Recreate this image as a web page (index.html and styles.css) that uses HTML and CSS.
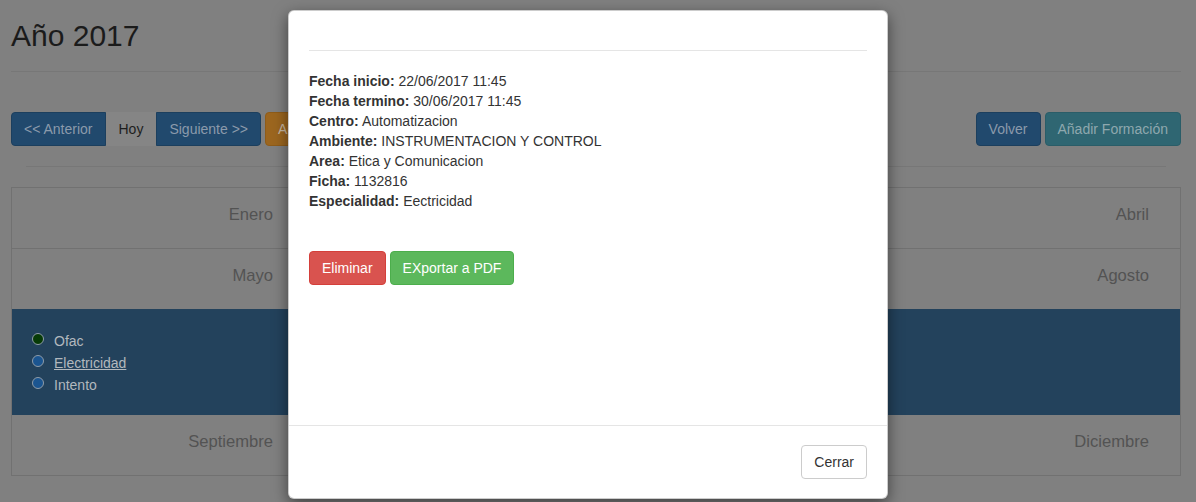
FILE: index.html
```html
<!DOCTYPE html>
<html lang="es">
<head>
<meta charset="utf-8">
<title>Año 2017</title>
<link rel="stylesheet" href="styles.css">
</head>
<body>
<div class="page">
  <h2 class="title">Año 2017</h2>
  <hr class="rule">
  <div class="toolbar">
    <div class="tools">
      <div class="btn-group">
        <button class="btn btn-primary">&lt;&lt; Anterior</button>
        <button class="btn btn-today">Hoy</button>
        <button class="btn btn-primary">Siguiente &gt;&gt;</button>
      </div>
      <button class="btn btn-warning">Añadir</button>
    </div>
    <div class="tools">
      <button class="btn btn-primary">Volver</button>
      <button class="btn btn-info">Añadir Formación</button>
    </div>
  </div>
  <hr class="rule inset">
  <div class="calendar">
    <div class="cal-row">
      <div class="cell">Enero</div>
      <div class="cell">Febrero</div>
      <div class="cell">Marzo</div>
      <div class="cell">Abril</div>
    </div>
    <div class="cal-row">
      <div class="cell">Mayo</div>
      <div class="cell">Junio</div>
      <div class="cell">Julio</div>
      <div class="cell">Agosto</div>
    </div>
    <div class="cal-detail">
      <ul class="events">
        <li><span class="dot dot-green"></span>Ofac</li>
        <li><span class="dot dot-blue"></span><a class="event-link">Electricidad</a></li>
        <li><span class="dot dot-blue"></span>Intento</li>
      </ul>
    </div>
    <div class="cal-row last">
      <div class="cell">Septiembre</div>
      <div class="cell">Octubre</div>
      <div class="cell">Noviembre</div>
      <div class="cell">Diciembre</div>
    </div>
  </div>
</div>

<div class="modal">
  <div class="modal-header"></div>
  <div class="modal-body">
    <div class="details">
      <div><strong>Fecha inicio:</strong> 22/06/2017 11:45</div>
      <div><strong>Fecha termino:</strong> 30/06/2017 11:45</div>
      <div><strong>Centro:</strong> Automatizacion</div>
      <div><strong>Ambiente:</strong> INSTRUMENTACION Y CONTROL</div>
      <div><strong>Area:</strong> Etica y Comunicacion</div>
      <div><strong>Ficha:</strong> 1132816</div>
      <div><strong>Especialidad:</strong> Eectricidad</div>
    </div>
    <div class="actions">
      <button class="btn btn-danger">Eliminar</button>
      <button class="btn btn-success">EXportar a PDF</button>
    </div>
  </div>
  <div class="modal-footer">
    <button class="btn btn-default">Cerrar</button>
  </div>
</div>
</body>
</html>
```

FILE: styles.css
```css
* { box-sizing: border-box; }

html, body {
  margin: 0;
  height: 100%;
}

body {
  background: #808080;
  font-family: "Liberation Sans", Arial, Helvetica, sans-serif;
  font-size: 14px;
  line-height: 20px;
  color: #1a1a1a;
  overflow: hidden;
}

.page {
  width: 1170px;
  margin-left: 11px;
  padding-top: 19px;
}

.title {
  margin: 0;
  font-size: 30px;
  line-height: 33px;
  font-weight: normal;
  color: #1b1b1b;
}

.rule {
  border: 0;
  border-top: 1px solid #777777;
  height: 0;
  margin: 19px 0 0;
}

.rule.inset {
  margin: 20px 15px 0;
}

.toolbar {
  margin-top: 40px;
  display: flex;
  justify-content: space-between;
}

.tools {
  display: flex;
  gap: 4px;
}

.btn-group {
  display: flex;
}

.btn {
  display: inline-block;
  margin: 0;
  padding: 6px 12px;
  font-family: inherit;
  font-size: 14px;
  line-height: 20px;
  border: 1px solid transparent;
  border-radius: 4px;
  white-space: nowrap;
  cursor: pointer;
}

.btn-group .btn { border-radius: 0; }
.btn-group .btn:first-child { border-radius: 4px 0 0 4px; }
.btn-group .btn:last-child { border-radius: 0 4px 4px 0; }

.btn-primary {
  background: #21496d;
  border-color: #1c3f5e;
  color: #8b9aab;
}

.btn-today {
  background: #858585;
  border-color: #858585;
  color: #1e1e1e;
}

.btn-warning {
  background: #9c661f;
  border-color: #8f5c19;
  color: #c7b8a3;
}

.btn-info {
  background: #2f6672;
  border-color: #2a5d68;
  color: #8ea8ae;
}

.btn-danger {
  background: #d9534f;
  border-color: #d43f3a;
  color: #ffffff;
}

.btn-success {
  background: #5cb85c;
  border-color: #4cae4c;
  color: #ffffff;
}

.btn-default {
  background: #ffffff;
  border-color: #cccccc;
  color: #333333;
}

.calendar {
  margin-top: 20px;
  border: 1px solid #717171;
}

.cal-row {
  display: grid;
  grid-template-columns: repeat(4, 1fr);
  height: 61px;
  border-bottom: 1px solid #717171;
}

.cal-row.last {
  height: 60px;
  border-bottom: 0;
}

.cell {
  padding: 17px 31px 0 0;
  text-align: right;
  font-size: 16.6px;
  line-height: 20px;
  color: #535353;
}

.cal-detail {
  height: 106px;
  margin-top: -1px;
  background: #23425c;
  padding: 21px 0 0 20px;
}

.events {
  list-style: none;
  margin: 0;
  padding: 0;
}

.events li {
  display: flex;
  align-items: flex-start;
  line-height: 22px;
  color: #b2b8be;
}

.dot {
  width: 12px;
  height: 12px;
  margin: 3px 10px 0 0;
  border-radius: 50%;
  border: 1px solid #8f9ca8;
  flex: none;
}

.dot-green { background: #073b07; }
.dot-blue { background: #1b5590; }

.event-link {
  color: #b2b8be;
  text-decoration: underline;
}

.modal {
  position: absolute;
  left: 288px;
  top: 10px;
  width: 600px;
  height: 489px;
  display: flex;
  flex-direction: column;
  background: #ffffff;
  border: 1px solid rgba(0, 0, 0, 0.2);
  border-radius: 6px;
  box-shadow: 0 5px 15px rgba(0, 0, 0, 0.5);
  color: #333333;
}

.modal-header {
  height: 40px;
  margin: 0 20px;
  border-bottom: 1px solid #e5e5e5;
  flex: none;
}

.modal-body {
  flex: 1;
  padding: 20px 20px 0;
}

.details strong {
  font-weight: bold;
}

.actions {
  margin-top: 40px;
  display: flex;
  gap: 4px;
}

.modal-footer {
  flex: none;
  border-top: 1px solid #e5e5e5;
  padding: 19px 20px 19px;
  display: flex;
  justify-content: flex-end;
}
```
